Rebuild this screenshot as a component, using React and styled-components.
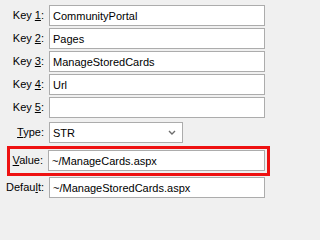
import React from "react";
import styled, { createGlobalStyle } from "styled-components";

const Global = createGlobalStyle`
  html, body {
    margin: 0;
    background: #f0f0f0;
  }
  body {
    font-family: "Liberation Sans", Arial, sans-serif;
    font-size: 11px;
    color: #000;
  }
`;

const Form = styled.div`
  width: 271px;
  height: 202px;
  box-sizing: border-box;
  padding: 5px 6px 0 0;
  display: flex;
  flex-direction: column;
`;

const Row = styled.div`
  display: flex;
  align-items: center;
  gap: 5px;
  margin-top: ${(p) => p.$top || 0}px;
`;

const Label = styled.label`
  flex: 0 0 ${(p) => 44 - (p.$inset || 0)}px;
  text-align: right;
  white-space: nowrap;
  line-height: 13px;
  & u {
    text-decoration: underline;
    text-underline-offset: 1px;
  }
`;

const Input = styled.input`
  flex: 1;
  min-width: 0;
  height: 21px;
  box-sizing: border-box;
  margin: 0;
  border: 1px solid #acacac;
  background: #fff;
  padding: 0 3px;
  font-family: "Liberation Sans", Arial, sans-serif;
  font-size: 11px;
  color: #000;
  outline: none;
`;

const SelectBox = styled.div`
  width: 134px;
  height: 21px;
  box-sizing: border-box;
  border: 1px solid #acacac;
  background: #fff;
  display: flex;
  align-items: center;
  justify-content: space-between;
  padding: 0 6px 0 3px;
`;

const Highlight = styled.div`
  margin: 3px -5px 0 7px;
  border: 3px solid #ee1111;
  padding: 1px 2px 2px 0;
`;

const Chevron = () => (
  <svg width="8" height="5" viewBox="0 0 8 5">
    <path d="M1 1 L4 4 L7 1" fill="none" stroke="#6d6d6d" strokeWidth="1.4" />
  </svg>
);

const keys = [
  ["1", "CommunityPortal"],
  ["2", "Pages"],
  ["3", "ManageStoredCards"],
  ["4", "Url"],
  ["5", ""],
];

export default function App() {
  return (
    <>
      <Global />
      <Form>
        {keys.map(([n, v], i) => (
          <Row key={n} $top={i === 0 ? 0 : 2}>
            <Label>
              Key <u>{n}</u>:
            </Label>
            <Input defaultValue={v} />
          </Row>
        ))}
        <Row $top={4}>
          <Label>
            <u>T</u>ype:
          </Label>
          <SelectBox>
            <span>STR</span>
            <Chevron />
          </SelectBox>
        </Row>
        <Highlight>
          <Row>
            <Label $inset={11}>
              <u>V</u>alue:
            </Label>
            <Input defaultValue="~/ManageCards.aspx" />
          </Row>
        </Highlight>
        <Row $top={1}>
          <Label>
            Defau<u>l</u>t:
          </Label>
          <Input defaultValue="~/ManageStoredCards.aspx" />
        </Row>
      </Form>
    </>
  );
}
